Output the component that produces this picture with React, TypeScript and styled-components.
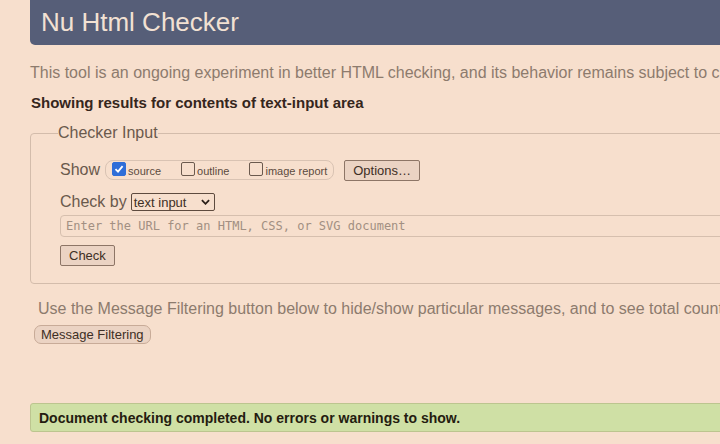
import React from 'react';
import styled, { createGlobalStyle } from 'styled-components';

const GlobalStyle = createGlobalStyle`
  html, body {
    margin: 0;
    padding: 0;
    background: #f7dfcd;
    overflow: hidden;
  }
  body {
    font-family: "Liberation Sans", Arial, sans-serif;
  }
`;

const Page = styled.div`
  width: 1000px;
  height: 444px;
  padding-left: 30px;
  box-sizing: border-box;
`;

const Header = styled.h1`
  margin: 0;
  height: 45px;
  background: #565e78;
  border-radius: 0 0 0 5px;
  color: #f2e1d3;
  font-weight: normal;
  font-size: 26px;
  line-height: 44px;
  padding-left: 11px;
`;

const Intro = styled.p`
  margin: 18px 0 0;
  color: #8d7b6d;
  font-size: 16px;
  line-height: 20px;
  white-space: nowrap;
`;

const ResultFor = styled.p`
  margin: 10px 0 0 1px;
  color: #35261c;
  font-size: 15px;
  font-weight: bold;
  line-height: 20px;
`;

const Fieldset = styled.fieldset`
  margin: 11px 0 0;
  padding: 17px 29px 17px 29px;
  border: 1px solid #d3bcab;
  border-radius: 4px;
  min-width: 0;
`;

const Legend = styled.legend`
  padding: 0;
  margin-left: -2px;
  color: #6a594c;
  font-size: 16px;
`;

const Row = styled.div<{ $gapTop?: number }>`
  display: flex;
  align-items: center;
  gap: 4px;
  color: #6a594c;
  font-size: 16px;
  height: 22px;
  margin-top: ${p => p.$gapTop ?? 0}px;
`;

const ShowGroup = styled.div`
  display: flex;
  align-items: center;
  height: 18px;
  padding: 0 6px 0 6px;
  border: 1px solid #d9c3b3;
  border-radius: 8px;
  gap: 20px;
  margin-left: 1px;
  margin-right: 6px;
`;

const Check = styled.label`
  display: flex;
  align-items: center;
  gap: 2px;
  font-size: 11px;
  color: #5c4b40;
  padding-top: 1px;
`;

const Box = styled.span<{ $checked?: boolean }>`
  display: inline-flex;
  align-items: center;
  justify-content: center;
  width: 12px;
  height: 12px;
  border-radius: 2px;
  border: 1px solid ${p => (p.$checked ? '#2f6ed8' : '#6b5a4e')};
  background: ${p => (p.$checked ? '#2f6ed8' : 'transparent')};
  margin-top: -3px;
`;

const Button = styled.button<{ $pill?: boolean }>`
  font-family: "Liberation Sans", Arial, sans-serif;
  font-size: 13px;
  color: #3e2f25;
  background: #ebd3c3;
  border: 1px solid ${p => (p.$pill ? '#c8ab98' : '#8d7566')};
  border-radius: ${p => (p.$pill ? '7px' : '2px')};
  height: ${p => (p.$pill ? '19px' : '21px')};
  padding: 0 ${p => (p.$pill ? '6px' : '8px')};
  line-height: 1;
`;

const Select = styled.div`
  display: flex;
  align-items: center;
  justify-content: space-between;
  width: 84px;
  height: 18px;
  box-sizing: border-box;
  border: 1px solid #5e4b3f;
  border-radius: 2px;
  padding: 0 4px 0 2px;
  font-size: 13px;
  color: #3e2f25;
`;

const UrlInput = styled.input`
  display: block;
  width: 100%;
  box-sizing: border-box;
  height: 22px;
  margin-top: 2px;
  border: 1px solid #d6bfae;
  border-radius: 4px;
  background: transparent;
  padding: 0 5px;
  font-family: "DejaVu Sans Mono", "Liberation Mono", monospace;
  font-size: 12px;
  &::placeholder {
    color: #a28f82;
  }
`;

const CheckRow = styled.div`
  margin-top: 8px;
`;

const FilterNote = styled.p`
  margin: 15px 0 0 8px;
  color: #8d7b6d;
  font-size: 16px;
  line-height: 20px;
  white-space: nowrap;
`;

const FilterRow = styled.div`
  margin: 6px 0 0 4px;
`;

const Success = styled.div`
  margin-top: 59px;
  height: 29px;
  box-sizing: border-box;
  background: #cfe0a5;
  border: 1px solid #bcc58f;
  border-radius: 3px 0 0 3px;
  padding-left: 8px;
  display: flex;
  align-items: center;
  color: #241c10;
  font-size: 14px;
  font-weight: bold;
`;

const Tick = () => (
  <svg width="10" height="10" viewBox="0 0 10 10">
    <path d="M1.5 5.2 L4 7.6 L8.6 2.2" stroke="#fff" strokeWidth="1.8" fill="none" />
  </svg>
);

const Chevron = () => (
  <svg width="9" height="6" viewBox="0 0 10 6">
    <path d="M1 1 L5 5 L9 1" stroke="#2a1f18" strokeWidth="2" fill="none" />
  </svg>
);

const App: React.FC = () => {
  return (
    <Page>
      <GlobalStyle />
      <Header>Nu Html Checker</Header>
      <Intro>
        This tool is an ongoing experiment in better HTML checking, and its behavior remains subject to change
      </Intro>
      <ResultFor>Showing results for contents of text-input area</ResultFor>
      <Fieldset>
        <Legend>Checker Input</Legend>
        <Row>
          Show
          <ShowGroup>
            <Check>
              <Box $checked>
                <Tick />
              </Box>
              source
            </Check>
            <Check>
              <Box />
              outline
            </Check>
            <Check>
              <Box />
              image report
            </Check>
          </ShowGroup>
          <Button>Options…</Button>
        </Row>
        <Row $gapTop={10}>
          Check by
          <Select>
            text input
            <Chevron />
          </Select>
        </Row>
        <UrlInput placeholder="Enter the URL for an HTML, CSS, or SVG document" />
        <CheckRow>
          <Button>Check</Button>
        </CheckRow>
      </Fieldset>
      <FilterNote>
        Use the Message Filtering button below to hide/show particular messages, and to see total counts of errors and warnings.
      </FilterNote>
      <FilterRow>
        <Button $pill>Message Filtering</Button>
      </FilterRow>
      <Success>Document checking completed. No errors or warnings to show.</Success>
    </Page>
  );
};

export default App;
